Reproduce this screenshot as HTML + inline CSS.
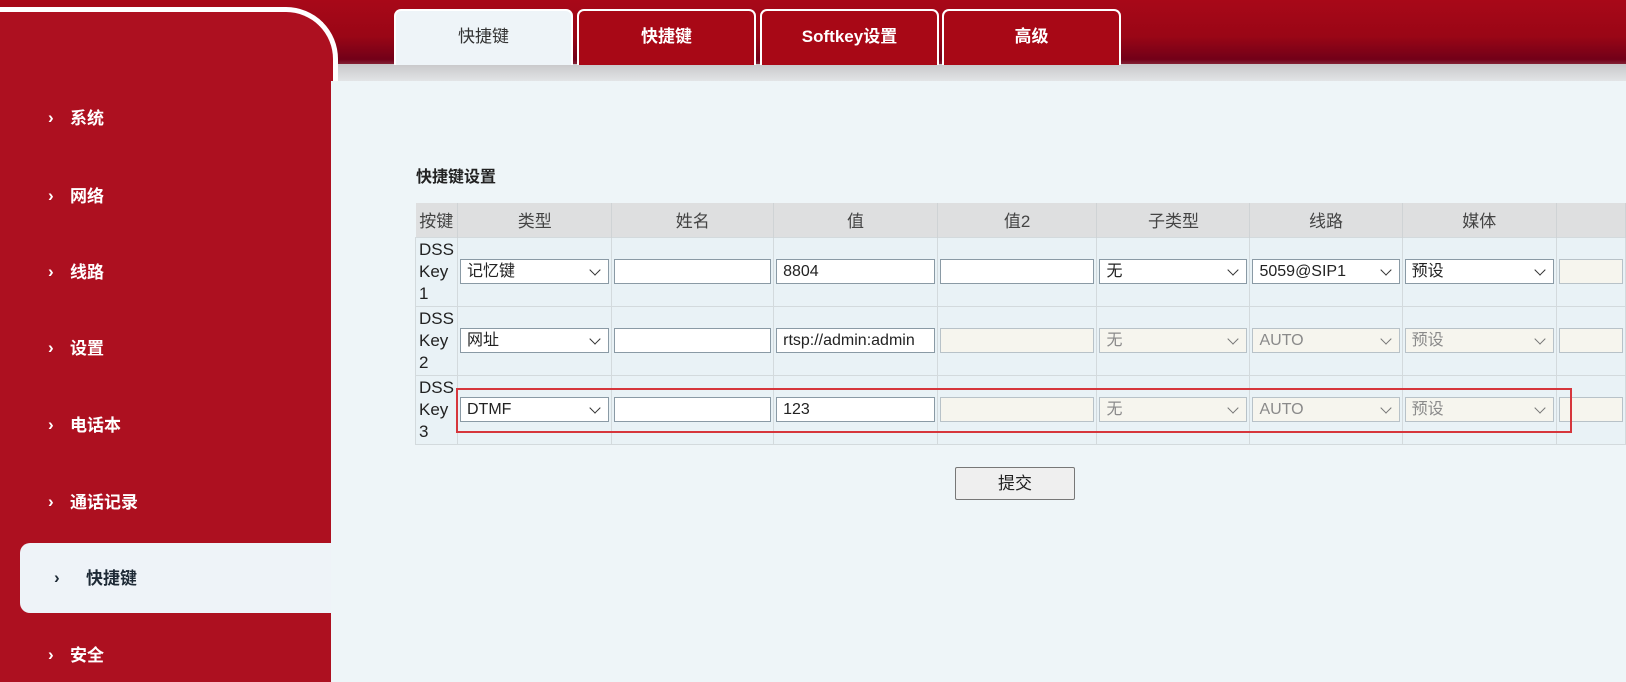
<!DOCTYPE html>
<html style="overflow:hidden;height:682px"><head><meta charset="utf-8"><style>
*{box-sizing:border-box;margin:0;padding:0}
body{width:1626px;height:682px;overflow:hidden;background:#eef5f8;position:relative;font-family:"Liberation Sans","Noto Sans CJK SC",sans-serif}
.top{position:absolute;left:0;top:0;width:1626px;height:66px;background:linear-gradient(180deg,#a80818 0%,#9a0616 55%,#720018 90%,#8a3040 100%)}
.band{position:absolute;left:0;top:64px;width:1626px;height:17px;background:linear-gradient(180deg,#c8c8ca,#e2e4e6)}
.side{position:absolute;left:-10px;top:7px;width:348px;height:675px;background:#ad1020;border:5px solid #fff;border-left:none;border-bottom:none;border-radius:0 52px 0 0}
.side2{position:absolute;left:331px;top:81px;width:8px;height:601px;background:#eef5f8}
.nav{position:absolute;left:0;color:#fff;font-weight:bold;font-size:17px;height:24px;line-height:24px}
.nav .ar{position:absolute;left:48px;font-size:17px;top:-1px}
.nav .t{position:absolute;left:70px;white-space:nowrap}
.act{position:absolute;left:20px;top:543px;width:311px;height:70px;background:#eef3f8;border-radius:10px 0 0 10px}
.tab{position:absolute;top:9px;height:56px;border:2px solid #fff;border-bottom:none;border-radius:7px 7px 0 0;background:#a80816;color:#fff;font-size:17px;text-align:center;line-height:52px;font-weight:bold}
.tab.on{background:#eef4f8;color:#333;font-weight:normal}
h3{position:absolute;left:416px;top:163px;font-size:16px;color:#222;font-weight:bold}
table{position:absolute;left:415px;top:203px;border-collapse:collapse;font-size:17px;color:#333}
th{background:#dedfe0;font-weight:normal;height:34px;border-right:1px solid #cfd3d5;color:#444}
td{background:#e9f2f6;border:1px solid #d3dadd;height:69px;vertical-align:middle;padding:0 2px}
td.k{line-height:22px;padding:0 3px;font-size:17px;color:#222}
.in,.sel{height:25px;border:1px solid #8a9aa5;background:#fff;font-size:16px;line-height:23px;padding-left:6px;color:#222;position:relative;white-space:nowrap;overflow:hidden}
.dis{background:#f6f5ee;border-color:#b8c2c8;color:#8a8a8a}
.sel::after{content:"";position:absolute;right:9px;top:6px;width:7px;height:7px;border-right:1.6px solid #333;border-bottom:1.6px solid #333;transform:rotate(45deg)}
.sel.dis::after{border-color:#777}
.red{position:absolute;left:456px;top:388px;width:1116px;height:45px;border:2px solid #d6363c}
.btn{position:absolute;left:955px;top:467px;width:120px;height:33px;border:1px solid #777;border-radius:2px;background:#efefef;font-size:17px;text-align:center;line-height:31px;color:#222}
</style></head><body>
<div class="top"></div>
<div class="band"></div>
<div class="side"></div>
<div class="side2"></div>
<div class="act"></div>
<div class="nav" style="top:107px"><span class="ar">›</span><span class="t">系统</span></div>
<div class="nav" style="top:185px"><span class="ar">›</span><span class="t">网络</span></div>
<div class="nav" style="top:261px"><span class="ar">›</span><span class="t">线路</span></div>
<div class="nav" style="top:337px"><span class="ar">›</span><span class="t">设置</span></div>
<div class="nav" style="top:414px"><span class="ar">›</span><span class="t">电话本</span></div>
<div class="nav" style="top:491px"><span class="ar">›</span><span class="t">通话记录</span></div>
<div class="nav" style="top:567px;color:#1e2a36"><span class="ar" style="left:54px">›</span><span class="t" style="left:86px">快捷键</span></div>
<div class="nav" style="top:644px"><span class="ar">›</span><span class="t">安全</span></div>
<div class="tab on" style="left:394px;width:179px">快捷键</div>
<div class="tab" style="left:577px;width:179px">快捷键</div>
<div class="tab" style="left:760px;width:179px">Softkey设置</div>
<div class="tab" style="left:942px;width:179px">高级</div>
<h3>快捷键设置</h3>
<table>
<tr><th style="width:42px">按键</th><th style="width:156px">类型</th><th style="width:164px">姓名</th><th style="width:164px">值</th><th style="width:162px">值2</th><th style="width:155px">子类型</th><th style="width:153px">线路</th><th style="width:156px">媒体</th><th style="width:70px"></th></tr>
<tr><td class="k">DSS<br>Key<br>1</td><td><div class="sel">记忆键</div></td><td><div class="in"></div></td><td><div class="in">8804</div></td><td><div class="in"></div></td><td><div class="sel">无</div></td><td><div class="sel">5059@SIP1</div></td><td><div class="sel">预设</div></td><td><div class="in dis"></div></td></tr>
<tr><td class="k">DSS<br>Key<br>2</td><td><div class="sel">网址</div></td><td><div class="in"></div></td><td><div class="in">rtsp://admin:admin</div></td><td><div class="in dis"></div></td><td><div class="sel dis">无</div></td><td><div class="sel dis">AUTO</div></td><td><div class="sel dis">预设</div></td><td><div class="in dis"></div></td></tr>
<tr><td class="k">DSS<br>Key<br>3</td><td><div class="sel">DTMF</div></td><td><div class="in"></div></td><td><div class="in">123</div></td><td><div class="in dis"></div></td><td><div class="sel dis">无</div></td><td><div class="sel dis">AUTO</div></td><td><div class="sel dis">预设</div></td><td><div class="in dis"></div></td></tr>
</table>
<div class="red"></div>
<div class="btn">提交</div>
</body></html>
